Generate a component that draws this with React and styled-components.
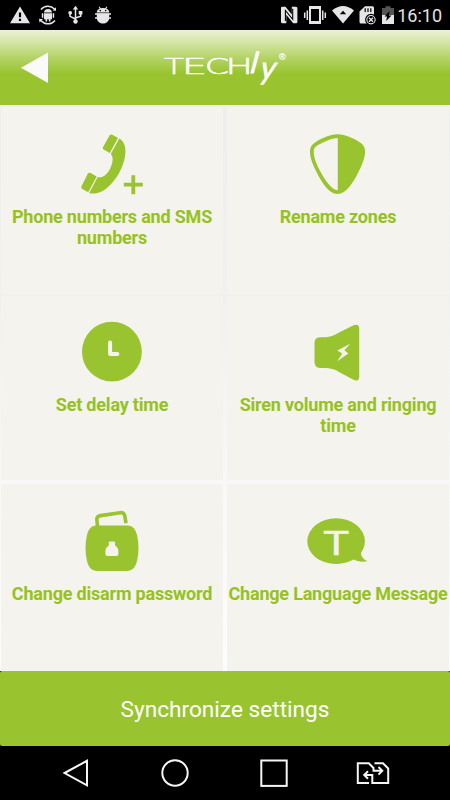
import React from "react";
import styled, { createGlobalStyle } from "styled-components";

const GREEN = "#99c42f";
const CARD = "#f4f3ee";

const PhoneIcon = () => (
  <TileIcon viewBox="0 0 80 66">
    <path d="M37.6 3.2Q38.8 2 40.4 2.8L46 5.9L37.8 21.1L31.6 17.6Q30.2 16.6 31 15.2Z" />
    <path d="M47.3 6.5C51.5 9 53.4 13.5 53.4 19C53.4 28 49.5 38 44.5 45.2C38 54.5 31 60.5 22.5 61.5C20 61.8 18.2 61.5 17.2 60.9L25.7 45.1C31 46.2 34.6 42.6 37.4 38C40 33.6 41.6 26.5 40 24.2L38.9 21.8Z" />
    <path d="M15.9 41.4Q17 40.3 18.6 41.1L24.7 44.5L16.2 60.2L10.2 57Q8.6 56 9.5 54.2Z" />
    <path d="M59.4 43.2h3.8v7.6h7.6v3.8h-7.6v7.6h-3.8v-7.6h-7.6v-3.8h7.6z" />
  </TileIcon>
);

const ShieldIcon = () => (
  <TileIcon viewBox="0 0 80 66">
    <path
      fillRule="evenodd"
      d="M39.5 2.3C44 2.3 47 3.2 51 4.8C56 7 59 8.3 62 10.4C66 13 67.2 16 67.1 20C66.9 26 64 33 60 41C55 50.5 48.5 61.9 39.5 61.9C30.5 61.9 24 50.5 19 41C15 33 12 26 12 20C12 16 13.2 12.8 17 10.4C20 8.3 23 7 28 4.8C32 3.2 35 2.3 39.5 2.3ZM39.8 6C34 6.2 30 8 24 11C18.5 13.6 15.6 15 15.7 20.5C16 27 19.5 34.5 23.5 41.5C28.5 50.2 34 58 39.8 58.2Z"
    />
  </TileIcon>
);

const ClockIcon = () => (
  <TileIcon viewBox="0 0 80 66">
    <circle cx="39.9" cy="31.7" r="29.9" />
    <path d="M38.1 22.5v11.6h7.3" fill="none" stroke={CARD} strokeWidth="4" strokeLinecap="round" strokeLinejoin="round" />
  </TileIcon>
);

const SirenIcon = () => (
  <TileIcon viewBox="0 0 80 66">
    <path d="M16.5 23Q16.5 17.4 22 17.3C33 17.5 35.5 15.8 41 12.6L55.5 5.2Q61.2 3.2 61.2 8.5V56.5Q61.2 62 55.5 59.7L41 51.9C35.5 48.5 32 48 22 48Q16.5 47.5 16.5 42Z" />
    <path d="M52.2 23.8L39.3 30.4L44.2 33.5L39.3 41.2L50.3 33.5L46.4 30.3Z" fill={CARD} />
  </TileIcon>
);

const LockIcon = () => (
  <TileIcon viewBox="0 0 80 66">
    <path d="M25.6 17.5L24.9 11.5Q24.3 7.2 28.5 6.6L48 3.7Q52.2 3 52.8 7L54 14.3" fill="none" stroke={GREEN} strokeWidth="3.6" />
    <path d="M24.5 16.6H55.5C61 16.6 63.5 20.5 65 26C67 34 67 44 65 52C63.5 58.5 60 62 55 62H25C20 62 16.5 58.5 15 52C13 44 13 34 15 26C16.5 20.5 19 16.6 24.5 16.6Z" />
    <path d="M36.8 33.5Q36.8 32.6 38 32.6H42Q43.1 32.6 43.1 33.5V36.4Q46.4 38.5 46.4 42V45Q46.4 47 44.4 47H35.4Q33.4 47 33.4 45V42Q33.4 38.5 36.8 36.4Z" fill={CARD} />
  </TileIcon>
);

const LanguageIcon = () => (
  <TileIcon viewBox="0 0 80 66">
    <ellipse cx="38.1" cy="32.2" rx="28.8" ry="22.9" />
    <path d="M63.5 42C62 46 64.5 50 69.5 52.2C64 53.2 59 52.5 55 50Z" />
    <text
      x="25.2"
      y="46"
      fill={CARD}
      stroke={CARD}
      strokeWidth=".6"
      fontFamily="Liberation Sans, sans-serif"
      fontSize="35"
      textLength="26"
      lengthAdjust="spacingAndGlyphs"
    >
      T
    </text>
  </TileIcon>
);

const tiles = [
  { label: "Phone numbers and SMS numbers", Icon: PhoneIcon, top: 25, gap: 2 },
  { label: "Rename zones", Icon: ShieldIcon, top: 25, gap: 2 },
  { label: "Set delay time", Icon: ClockIcon, top: 24, gap: 4 },
  { label: "Siren volume and ringing time", Icon: SirenIcon, top: 24, gap: 4 },
  { label: "Change disarm password", Icon: LockIcon, top: 25, gap: 0 },
  { label: "Change Language Message", Icon: LanguageIcon, top: 25, gap: 0 },
];

const StatusIcons = () => (
  <>
    <StatusGroup $gap={8}>
      <StatusIcon width="20" height="20" viewBox="0 0 20 20">
        <path fillRule="evenodd" d="M10 1.5L20 18.3H0ZM8.9 7.5V12.3H11.1V7.5ZM8.9 13.8V16H11.1V13.8Z" />
      </StatusIcon>
      <StatusIcon width="20" height="20" viewBox="0 0 20 20">
        <path d="M3 4.5A9 9 0 0 1 16.5 4M17 15.5A9 9 0 0 1 3 15.5" fill="none" stroke="#e6e6e6" strokeWidth="1.5" />
        <path d="M14.5 5.5L18 5.8L18 2.2ZM1 13.8L5 14.2L1.5 17.5Z" />
        <path d="M6 7.5Q6.3 4 10 4Q13.7 4 14 7.5ZM6 8.2H14V14.3H12.5V16.5H10.8V14.3H9.2V16.5H7.5V14.3H6ZM3.8 8.3H5.3V12.8H3.8ZM14.7 8.3H16.2V12.8H14.7Z" />
      </StatusIcon>
      <StatusIcon width="20" height="20" viewBox="0 0 20 20">
        <path d="M9.5 3V16M4 8.5V11.3L9.5 14M14.7 8V11.3L9.5 13" fill="none" stroke="#e6e6e6" strokeWidth="1.5" />
        <path d="M9.5 .8L12.2 4.5H6.8ZM12.7 6H16.4V9.5H12.7Z" />
        <circle cx="4.2" cy="7.8" r="1.9" />
        <circle cx="9.5" cy="16.5" r="2.2" />
      </StatusIcon>
      <StatusIcon width="20" height="20" viewBox="0 0 20 20">
        <path d="M2.5 7.5Q3 4.5 5.7 3.500L4.600 2L5.400 1.500L6.800 3.200Q9 2.600 11.200 3.200L12.600 1.500L13.400 2L12.300 3.500Q15 4.500 15.500 7.500Z" />
        <path d="M2.800 8.400H15.200V13C15.200 16.500 12 18.600 9 18.600S2.800 16.500 2.800 13Z" />
        <path d="M1 8.900H17M1 13H17" stroke="#e6e6e6" strokeWidth="1.500" />
        <circle cx="6.300" cy="5.600" r=".8" fill="#000" />
        <circle cx="11.700" cy="5.600" r=".8" fill="#000" />
      </StatusIcon>
    </StatusGroup>
    <StatusGroup $gap={5}>
      <StatusIcon width="18" height="20" viewBox="0 0 18 20">
        <path d="M1 3Q1 1.700 2.400 1.700H5.500L11.800 9.500V1.700H16Q17.400 1.700 17.400 3.200V16.700Q17.400 18.200 16 18.200H13.200L6.300 9.800V18.200H2.400Q1 18.200 1 16.700Z" />
        <path d="M5.400 16V5.500L12.700 14.300V3.800" fill="none" stroke="#000" strokeWidth="1.100" />
      </StatusIcon>
      <StatusIcon width="24" height="20" viewBox="0 0 24 20">
        <path fillRule="evenodd" d="M6 1H18V19H6ZM8 4V16H16V4Z" />
        <path d="M1.700 7.500V13M4.300 5.500V15M22.300 7.500V13M19.700 5.500V15" stroke="#e6e6e6" strokeWidth="1.500" />
      </StatusIcon>
      <StatusIcon width="22" height="20" viewBox="0 0 22 20">
        <path d="M0 5.500Q11-3.500 22 5.500L11 18.500Z" />
        <path d="M11 5.800L14.200 9.200H7.800Z" fill="#000" />
      </StatusIcon>
      <StatusIcon width="18" height="20" viewBox="0 0 18 20">
        <path d="M6 1.200H13.500Q15 1.200 15 2.700V17Q15 18.500 13.500 18.500H2Q.5 18.500 .5 17V6.500Z" />
        <path d="M6.200 3.300V7M9 3.300V7M11.800 3.300V7" stroke="#000" strokeWidth="1.200" />
        <circle cx="12" cy="14.700" r="5.300" stroke="#000" strokeWidth="1.200" />
        <circle cx="12" cy="14.700" r="3.600" fill="#000" />
        <path d="M10 12.700L14 16.700M14 12.700L10 16.700" stroke="#e6e6e6" strokeWidth="1.400" />
      </StatusIcon>
      <StatusIcon width="12" height="20" viewBox="0 0 12 20">
        <path d="M3.500 1.200H8.500V3H12V10H0V3H3.500Z" fill="#555" />
        <path d="M0 10H12V19H0Z" />
        <path d="M7.500 6L2.500 11.500H5L4.200 16L9.500 10.500H7Z" fill="#000" />
      </StatusIcon>
      <Clock>16:10</Clock>
    </StatusGroup>
  </>
);

// the wide letters of the wordmark, each stretched to its own width
const wordmark = [
  { char: "T", x: 3, width: 20 },
  { char: "E", x: 20.8, width: 25.3 },
  { char: "C", x: 43.7, width: 24.3 },
  { char: "H", x: 64.4, width: 27.4 },
];

const Logo = () => (
  <LogoSvg viewBox="0 0 130 60">
    {wordmark.map(({ char, x, width }) => (
      <text
        key={char}
        x={x}
        y="35.5"
        fontFamily="DejaVu Sans, sans-serif"
        fontWeight="200"
        fontSize="20.5"
        stroke="#fff"
        strokeWidth=".5"
        textLength={width}
        lengthAdjust="spacingAndGlyphs"
      >
        {char}
      </text>
    ))}
    <text transform="translate(89 34.500) skewX(-8)" fontFamily="Lato, sans-serif" fontStyle="italic" fontSize="29" stroke="#fff" strokeWidth=".8">
      l
    </text>
    <text transform="translate(98.500 41) skewX(-8)" fontFamily="Lato, sans-serif" fontStyle="italic" fontSize="32" stroke="#fff" strokeWidth=".6">
      y
    </text>
    <text x="118" y="22" fontFamily="Liberation Sans, sans-serif" fontSize="9" stroke="#fff" strokeWidth=".2">
      ®
    </text>
  </LogoSvg>
);

const App = () => {
  return (
    <Screen>
      <GlobalStyle />
      <StatusBar>
        <StatusIcons />
      </StatusBar>
      <Header>
        <BackButton aria-label="Back">
          <svg width="28" height="32" viewBox="0 0 28 32">
            <path d="M0 15.8L27 .6V31Z" fill="#fafafa" />
          </svg>
        </BackButton>
        <Logo />
      </Header>
      <TileGrid>
        {tiles.map(({ label, Icon, top, gap }) => (
          <Tile key={label} $top={top} $gap={gap}>
            <Icon />
            <TileLabel>{label}</TileLabel>
          </Tile>
        ))}
      </TileGrid>
      <SyncButton>Synchronize settings</SyncButton>
      <NavBar>
        <NavIcon viewBox="0 0 34 34">
          <path d="M5.6 17L28 4.8V29.4Z" />
        </NavIcon>
        <NavIcon viewBox="0 0 34 34">
          <circle cx="17" cy="17" r="12.7" />
        </NavIcon>
        <NavIcon viewBox="0 0 34 34">
          <rect x="4.3" y="4.5" width="25.4" height="25.4" />
        </NavIcon>
        <NavIcon viewBox="0 0 34 34">
          <path d="M13 27H1.8V7.2H12.8L17.5 12V14.8H26M22.5 11L26.3 14.8L22.5 18.6M18.5 7.2H27L32.2 12.5V27H16.3V19H8.5M12 15.2L8.2 19L12 22.8" />
        </NavIcon>
      </NavBar>
    </Screen>
  );
};

const GlobalStyle = createGlobalStyle`
  * {
    box-sizing: border-box;
  }

  body {
    margin: 0;
    background: #000;
    font-family: Roboto, sans-serif;
  }
`;

const Screen = styled.div`
  display: flex;
  flex-direction: column;
  width: 450px;
  height: 800px;
  overflow: hidden;
`;

const StatusBar = styled.div`
  display: flex;
  justify-content: space-between;
  align-items: center;
  height: 30px;
  padding: 0 8px 0 10px;
  background: #000;
`;

const StatusGroup = styled.div`
  display: flex;
  align-items: center;
  gap: ${(props) => props.$gap}px;
`;

const StatusIcon = styled.svg`
  display: block;
  fill: #e6e6e6;
`;

const Clock = styled.span`
  margin-left: -2px;
  padding-top: 1px;
  color: #e2e2e2;
  font-size: 18px;
  line-height: 30px;
`;

const Header = styled.header`
  display: flex;
  align-items: center;
  height: 75px;
  padding-left: 21px;
  background: linear-gradient(#eaf2d5 0%, #d2e4a1 18%, #b4d366 37%, ${GREEN} 58%, ${GREEN} 100%);
`;

const BackButton = styled.button`
  display: flex;
  width: 140px;
  padding: 0;
  border: 0;
  background: none;
`;

const LogoSvg = styled.svg`
  width: 130px;
  height: 60px;
  fill: #fff;
`;

const TileGrid = styled.main`
  display: grid;
  grid-template-columns: 222px 222px;
  grid-template-rows: 189px 188px 187px;
  column-gap: 4px;
  height: 566px;
  padding: 2px 1px 0;
  background: linear-gradient(#eeeeee, #f0f0f1 32%, #f8f8f8 66%, #fdfdfd);
`;

const Tile = styled.section`
  display: flex;
  flex-direction: column;
  align-items: center;
  margin-bottom: ${(props) => props.$gap}px;
  padding-top: ${(props) => props.$top}px;
  background: ${CARD};
`;

const TileIcon = styled.svg`
  flex: none;
  width: 80px;
  height: 66px;
  fill: ${GREEN};
`;

const TileLabel = styled.div`
  width: 222px;
  margin-top: 8px;
  color: #96c220;
  font-size: 18px;
  font-weight: 700;
  letter-spacing: -0.2px;
  line-height: 21px;
  text-align: center;
`;

const SyncButton = styled.button`
  height: 75px;
  padding: 2px 0 0;
  border: 0;
  border-radius: 2px;
  background: ${GREEN};
  color: #fff;
  font-family: inherit;
  font-size: 22.65px;
`;

const NavBar = styled.nav`
  display: flex;
  justify-content: space-between;
  align-items: center;
  height: 54px;
  padding: 0 60px 0 59px;
  background: #000;
`;

const NavIcon = styled.svg`
  width: 34px;
  height: 34px;
  fill: none;
  stroke: #f5f5f5;
  stroke-width: 2;
`;

export default App;
